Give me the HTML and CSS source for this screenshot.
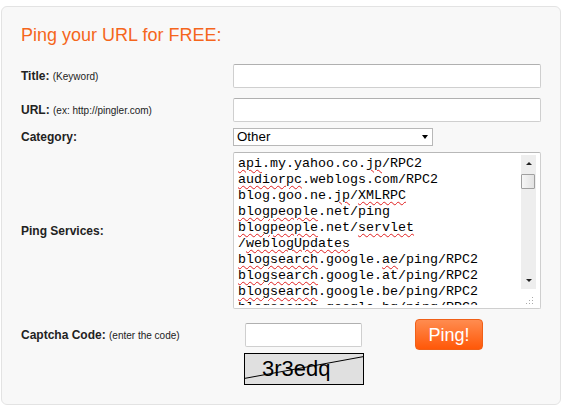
FILE: index.html
```html
<!DOCTYPE html>
<html>
<head>
<meta charset="utf-8">
<title>Ping your URL</title>
<link rel="stylesheet" href="styles.css">
</head>
<body>
<div class="panel">
  <h1 class="heading">Ping your URL for FREE:</h1>
  <form class="form">
    <div class="row row-title">
      <label class="label">Title: <small>(Keyword)</small></label>
      <input class="text" type="text">
    </div>
    <div class="row row-url">
      <label class="label">URL: <small>(ex: http://pingler.com)</small></label>
      <input class="text" type="text">
    </div>
    <div class="row row-cat">
      <label class="label">Category:</label>
      <span class="select-wrap"><select class="select"><option>Other</option></select></span>
    </div>
    <div class="row row-services">
      <label class="label">Ping Services:</label>
      <div class="ta">
        <div class="ta-text"><div><u>api</u>.my.yahoo.co.<u>jp</u>/RPC2</div><div><u>audiorpc</u>.weblogs.com/RPC2</div><div>blog.goo.ne.<u>jp</u>/<u>XMLRPC</u></div><div><u>blogpeople</u>.net/ping</div><div><u>blogpeople</u>.net/<u>servlet</u></div><div>/<u>weblogUpdates</u></div><div><u>blogsearch</u>.google.<u>ae</u>/ping/RPC2</div><div><u>blogsearch</u>.google.at/ping/RPC2</div><div><u>blogsearch</u>.google.be/ping/RPC2</div><div><u>blogsearch</u>.google.bg/ping/RPC2</div></div>
        <div class="ta-side">
          <div class="sb">
            <div class="sb-btn"><span class="arr-up"></span></div>
            <div class="sb-track"><div class="sb-thumb"></div></div>
            <div class="sb-btn"><span class="arr-down"></span></div>
          </div>
          <svg class="grip" width="8" height="8" viewBox="0 0 8 8">
            <rect x="6" y="0" width="1" height="1" fill="#aaa"/>
            <rect x="3" y="3" width="1" height="1" fill="#aaa"/>
            <rect x="6" y="3" width="1" height="1" fill="#aaa"/>
            <rect x="0" y="6" width="1" height="1" fill="#aaa"/>
            <rect x="3" y="6" width="1" height="1" fill="#aaa"/>
            <rect x="6" y="6" width="1" height="1" fill="#aaa"/>
          </svg>
        </div>
      </div>
    </div>
    <div class="row row-captcha">
      <label class="label label-captcha">Captcha Code: <small>(enter the code)</small></label>
      <div class="captcha-col">
        <input class="text captcha-input" type="text">
        <div class="captcha">3r3edq<svg class="captcha-line" width="120" height="32" viewBox="0 0 120 32"><line x1="0" y1="25.5" x2="120" y2="3.5" stroke="#000" stroke-width="1"/></svg></div>
      </div>
      <button class="ping" type="button">Ping!</button>
    </div>
  </form>
</div>
</body>
</html>
```
FILE: styles.css
```css
html, body {
  margin: 0;
  padding: 0;
  background: #fff;
}
body {
  font-family: "Liberation Sans", Arial, sans-serif;
  color: #222;
}
.panel {
  box-sizing: border-box;
  margin: 6px 0 0 1px;
  width: 560px;
  height: 399px;
  border: 1px solid #e3e3e3;
  border-radius: 6px;
  background: #f8f8f8;
  padding: 18px 0 0 19px;
}
.heading {
  margin: 0;
  font-size: 18px;
  line-height: 21px;
  font-weight: normal;
  color: #f5661c;
}
.form {
  margin: 0;
}
.row {
  display: flex;
  align-items: center;
}
.row-title { margin-top: 18px; }
.row-url { margin-top: 10px; }
.row-cat { margin-top: 5px; }
.row-services { margin-top: 6px; }
.row-captcha {
  margin-top: 14px;
  align-items: flex-start;
}
.label {
  width: 212px;
  flex: none;
  font-size: 12px;
  font-weight: bold;
  color: #222;
}
.label small {
  font-size: 10px;
  font-weight: normal;
}
.text {
  box-sizing: border-box;
  width: 308px;
  height: 24px;
  margin: 0;
  border: 1px solid #cfcfcf;
  border-top-color: #b0b0b0;
  border-radius: 2px;
  background: #fff;
  padding: 0 4px;
  font: 13px "Liberation Sans", Arial, sans-serif;
}
.select-wrap {
  position: relative;
  display: inline-block;
}
.select-wrap::after {
  content: "";
  position: absolute;
  right: 5px;
  top: 8px;
  border-left: 3px solid transparent;
  border-right: 3px solid transparent;
  border-top: 4px solid #000;
  pointer-events: none;
}
.select {
  -webkit-appearance: none;
  appearance: none;
  box-sizing: border-box;
  width: 200px;
  height: 18px;
  margin: 0;
  border: 1px solid #b8b8b8;
  border-radius: 0;
  background: #fff;
  color: #000;
  padding: 0 0 0 3px;
  font: 13.33px/16px "Liberation Sans", Arial, sans-serif;
}
.ta {
  box-sizing: border-box;
  width: 308px;
  height: 157px;
  border: 1px solid #cfcfcf;
  border-top-color: #b8b8b8;
  border-radius: 2px;
  background: #fff;
  display: flex;
}
.ta-text {
  flex: 1;
  margin: 3px 0 3px 4px;
  overflow: hidden;
  font: 13.33px/16px "Liberation Mono", "Courier New", monospace;
  color: #000;
  white-space: pre;
}
.ta-text u {
  text-decoration: underline wavy #e02020;
  text-decoration-thickness: 1px;
  text-underline-offset: 2px;
}
.ta-side {
  flex: none;
  width: 15px;
  margin: 2px 4px 0 0;
  display: flex;
  flex-direction: column;
  align-items: flex-end;
}
.sb {
  width: 15px;
  height: 134px;
  background: #eeeeee;
  display: flex;
  flex-direction: column;
}
.sb-btn {
  height: 17px;
  display: flex;
  align-items: center;
  justify-content: center;
}
.arr-up {
  border-left: 3px solid transparent;
  border-right: 3px solid transparent;
  border-bottom: 3px solid #222;
}
.arr-down {
  border-left: 3px solid transparent;
  border-right: 3px solid transparent;
  border-top: 3px solid #222;
}
.sb-track {
  flex: 1;
  padding: 2px 0 0 0;
}
.sb-thumb {
  box-sizing: border-box;
  height: 15px;
  width: 14px;
  margin-left: 0;
  border: 1px solid #a0a0a0;
  border-radius: 1px;
  background: linear-gradient(to right, #f6f6f6, #e2e2e2);
}
.grip {
  display: block;
  margin: 8px 2px 0 0;
}
.label-captcha {
  line-height: 24px;
}
.captcha-col {
  margin-left: 12px;
  display: flex;
  flex-direction: column;
}
.captcha-input {
  width: 117px;
}
.captcha {
  position: relative;
  box-sizing: border-box;
  width: 120px;
  height: 32px;
  margin: 6px 0 0 -1px;
  border: 1px solid #000;
  background: #e0e0e0;
  padding-left: 17px;
  font: 22px/30px "Liberation Sans", Arial, sans-serif;
  color: #000;
}
.captcha-line {
  position: absolute;
  left: -1px;
  top: -1px;
}
.ping {
  box-sizing: border-box;
  margin: -4px 0 0 51px;
  width: 68px;
  height: 31px;
  border: 1px solid #f06018;
  border-radius: 4px;
  background: linear-gradient(#ff8c50, #ff5808);
  color: #fff;
  font: 18px/1 "Liberation Sans", Arial, sans-serif;
  padding: 0;
}
```
